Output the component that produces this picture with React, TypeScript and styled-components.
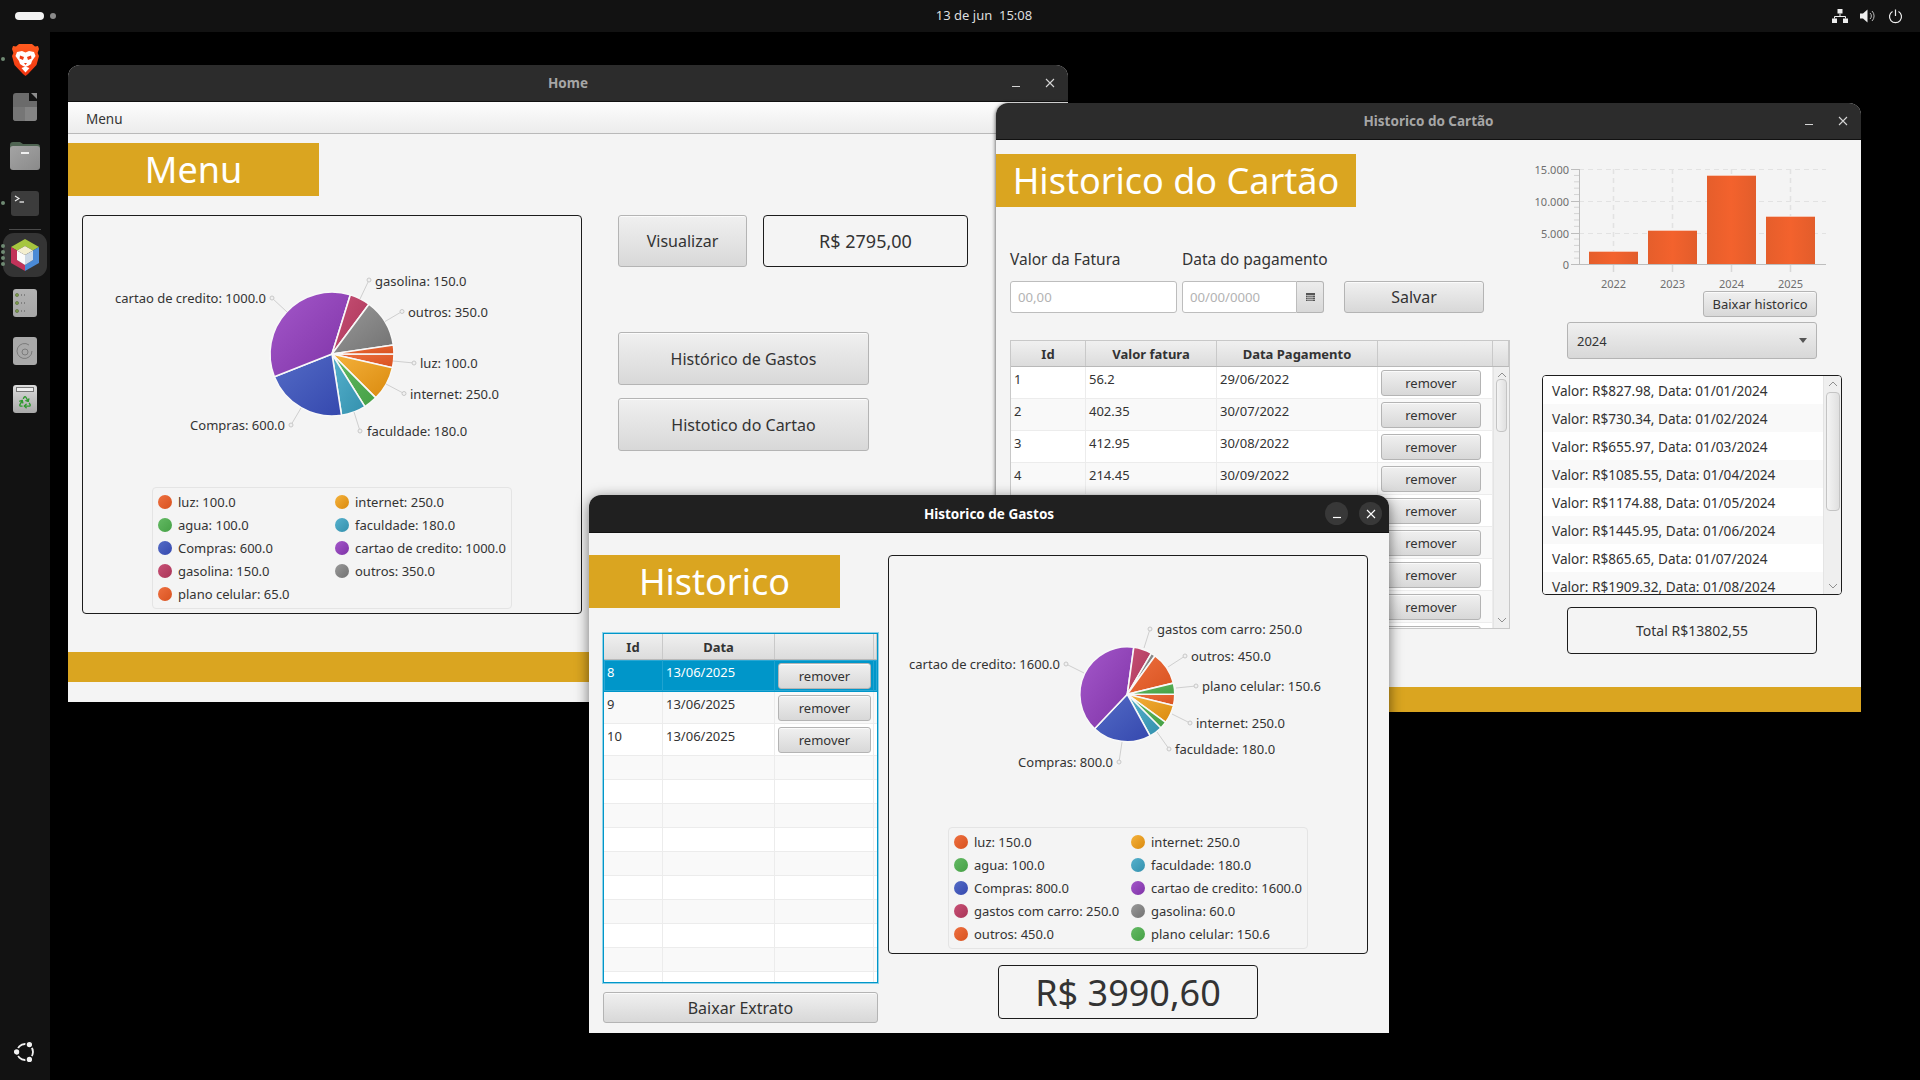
import React from "react";
import styled, { createGlobalStyle } from "styled-components";
import { Recycle } from "lucide-react";

const GlobalStyle = createGlobalStyle`
  html, body { margin: 0; padding: 0; width: 1920px; height: 1080px; overflow: hidden; background: #000; }
  body, input, button { font-family: "Noto Sans", "DejaVu Sans", sans-serif; }
  * { box-sizing: border-box; }
`;

const GOLD = "#daa520";
const TEXT = "#333";

const Screen = styled.div`display: flex; flex-direction: column; width: 1920px; height: 1080px; background: #000;`;
const TopBar = styled.div`display: grid; grid-template-columns: 1fr auto 1fr; align-items: center; height: 32px; background: #121212; padding: 0 17px 0 15px; flex: none;`;
const Workspaces = styled.div`display: flex; align-items: center; gap: 6px;`;
const ActivePill = styled.span`width: 29px; height: 8px; border-radius: 4px; background: #f2f2f2;`;
const IdleDot = styled.span`width: 6px; height: 6px; border-radius: 50%; background: #8a8a8a;`;
const Clock = styled.div`color: #dedede; font-size: 13px; line-height: 30px; margin: 0 0 2px 50px; white-space: pre;`;
const Tray = styled.div`display: flex; justify-content: flex-end; align-items: center; gap: 12px;`;
const Below = styled.div`display: flex; flex: 1; min-height: 0;`;

const Dock = styled.div`display: flex; flex-direction: column; align-items: center; width: 50px; background: #121212; padding: 3px 0; flex: none;`;
const DockSlot = styled.div<{ $active?: boolean }>`
  position: relative; display: flex; align-items: center; justify-content: center; flex: none;
  height: 48px; width: 44px;
  &::before {
    content: ""; position: absolute; left: 0; right: 0; top: 2px; bottom: 2px; border-radius: 11px;
    background: ${(p) => (p.$active ? "#343434" : "transparent")};
  }
  & > svg { position: relative; }
`;
const DockPip = styled.span`position: absolute; left: -2px; top: 50%; margin-top: -2px; width: 4px; height: 4px; border-radius: 50%; background: #6f8a73;`;
const DockPips = styled.span`position: absolute; left: -2px; top: 13px; display: flex; flex-direction: column; gap: 2px; z-index: 1;`;
const DockPipItem = styled.span`width: 4px; height: 4px; border-radius: 50%; background: #6f8a73;`;
const DockSep = styled.div`height: 1px; width: 32px; background: #4a4a4a; margin: 2px 0 1px; flex: none;`;
const DockEnd = styled.div`margin-top: auto;`;
const TrashBox = styled.div`
  position: relative; display: flex; align-items: center; justify-content: center; width: 24px; height: 28px; padding-top: 6px;
  border-radius: 3px; background: linear-gradient(#dcdcdc, #a9a9a9);
  &::before { content: ""; position: absolute; left: 3px; right: 3px; top: 2px; height: 3px; border: 1px solid #777; background: #eee; }
`;

const Desktop = styled.div`position: relative; flex: 1;`;
const Win = styled.div<{ $x: number; $y: number; $w: number; $h: number; $active?: boolean }>`
  position: absolute; left: ${(p) => p.$x - 50}px; top: ${(p) => p.$y - 32}px; width: ${(p) => p.$w}px; height: ${(p) => p.$h}px;
  display: flex; flex-direction: column; background: #f4f4f4; border-radius: 12px 12px 0 0; overflow: hidden;
  box-shadow: ${(p) => (p.$active ? "0 3px 14px rgba(0,0,0,.55)" : "0 1px 4px rgba(0,0,0,.75)")};
`;
const TitleBar = styled.div<{ $active?: boolean; $h: number }>`
  display: grid; grid-template-columns: 1fr auto 1fr; align-items: center; height: ${(p) => p.$h}px; flex: none;
  background: ${(p) => (p.$active ? "#202020" : "#2c2c2c")};
  border-bottom: 1px solid #111;
  color: ${(p) => (p.$active ? "#fff" : "#a6a6a6")};
  font-size: 13.5px; font-weight: 700;
`;
const TitleText = styled.div`grid-column: 2;`;
const Controls = styled.div`grid-column: 3; display: flex; justify-content: flex-end; gap: 11px; padding-right: 7px;`;
const Ctl = styled.div<{ $active?: boolean }>`
  display: flex; align-items: center; justify-content: center; width: 23px; height: 23px; border-radius: 50%;
  background: ${(p) => (p.$active ? "#383838" : "transparent")};
`;

const MenuBar = styled.div`height: 32px; flex: none; display: flex; align-items: center; padding: 3px 0 0 18px; font-size: 13.5px; color: ${TEXT}; background: linear-gradient(#fdfdfd, #ececec); border-bottom: 1px solid #b9b9b9;`;
const Banner = styled.div<{ $w: number; $mt: number }>`
  display: flex; align-items: center; justify-content: center; flex: none; height: 53px; width: ${(p) => p.$w}px; margin-top: ${(p) => p.$mt}px;
  background: ${GOLD}; color: #fff; font-size: 36px; line-height: 1;
`;
const Footer = styled.div<{ $mt: number }>`height: 30px; flex: none; background: ${GOLD}; margin-top: ${(p) => p.$mt}px;`;

const HomeMain = styled.div`display: flex; gap: 36px; margin: 19px 0 0 14px;`;
const ChartBox = styled.div<{ $w: number }>`
  display: flex; flex-direction: column; align-items: center; width: ${(p) => p.$w}px; height: 399px; flex: none;
  border: 1px solid #1c1c1c; border-radius: 4px; background: #f4f4f4;
  & > svg { display: block; flex: none; }
`;
const Legend = styled.div`
  display: grid; grid-template-columns: 177px auto; grid-auto-rows: 23px; width: 360px; height: 122px; margin-top: 1px; padding: 2px 0 0 5px; flex: none;
  border: 1px solid #e4e4e4; border-radius: 4px; font-size: 13px; color: ${TEXT};
`;
const LegendItem = styled.div`display: flex; align-items: center; gap: 6px; white-space: nowrap;`;
const Swatch = styled.span<{ $a: string; $b: string }>`width: 14px; height: 14px; border-radius: 50%; flex: none; background: linear-gradient(135deg, ${(p) => p.$a}, ${(p) => p.$b});`;

const HomeSide = styled.div`display: flex; flex-direction: column;`;
const SideTop = styled.div`display: flex; gap: 16px; margin-bottom: 65px;`;
const SideStack = styled.div`display: flex; flex-direction: column; gap: 13px;`;
const Btn = styled.button<{ $w: number; $h: number; $fs?: number }>`
  display: flex; align-items: center; justify-content: center; padding: 0; flex: none;
  width: ${(p) => p.$w}px; height: ${(p) => p.$h}px; font-size: ${(p) => p.$fs ?? 16}px; color: ${TEXT};
  background: linear-gradient(#f0f0f0, #d8d8d8); border: 1px solid #b4b4b4; border-radius: 3px;
  box-shadow: inset 0 1px 0 rgba(255,255,255,.7);
`;
const ValueBox = styled.div<{ $w: number; $h: number; $fs: number }>`
  display: flex; align-items: center; justify-content: center; flex: none; background: #f4f4f4;
  width: ${(p) => p.$w}px; height: ${(p) => p.$h}px; font-size: ${(p) => p.$fs}px; color: ${TEXT};
  border: 1px solid #1c1c1c; border-radius: 4px;
`;

const CartaoBody = styled.div`display: flex; flex: none;`;
const CartaoLeft = styled.div`display: flex; flex-direction: column; width: 514px; flex: none;`;
const FormArea = styled.div`display: grid; grid-template-columns: 167px 142px 140px; column-gap: 5px; padding-left: 14px; margin-top: 39px;`;
const FieldLabel = styled.div`font-size: 15.5px; line-height: 26px; color: ${TEXT}; white-space: nowrap; margin-bottom: 9px;`;
const TextInput = styled.input`
  width: 100%; height: 32px; padding: 0 7px; font-size: 13.2px; color: ${TEXT}; background: #fff;
  border: 1px solid #bdbdbd; border-radius: 3px; outline: none;
  &::placeholder { color: #b3b3b3; opacity: 1; }
`;
const DateGroup = styled.div`display: flex; height: 32px;`;
const DateInput = styled(TextInput)`border-radius: 3px 0 0 3px; width: 115px; flex: none;`;
const CalendarBtn = styled.div`flex: 1; display: flex; align-items: center; justify-content: center; background: linear-gradient(#ececec, #d8d8d8); border: 1px solid #b4b4b4; border-left: none; border-radius: 0 3px 3px 0;`;
const SaveCell = styled.div`margin-left: 15px;`;

const Table = styled.div<{ $focus?: boolean; $h: number; $mt: number; $ml: number; $w: number }>`
  display: flex; flex-direction: column; overflow: hidden; background: #fff; flex: none;
  height: ${(p) => p.$h}px; width: ${(p) => p.$w}px; margin: ${(p) => p.$mt}px 0 0 ${(p) => p.$ml}px;
  border: 1px solid ${(p) => (p.$focus ? "#0096c9" : "#c8c8c8")};
  box-shadow: ${(p) => (p.$focus ? "0 0 0 1px #8fd2e8" : "none")};
`;
const HeaderRow = styled.div<{ $cols: string; $h: number }>`
  display: grid; grid-template-columns: ${(p) => p.$cols}; height: ${(p) => p.$h}px; flex: none;
  background: linear-gradient(#f0f0f0, #dcdcdc); border-bottom: 1px solid #b9b9b9;
`;
const HeaderCell = styled.div`display: flex; align-items: center; justify-content: center; font-size: 13px; font-weight: 700; color: ${TEXT}; border-right: 1px solid #c9c9c9;`;
const TableBody = styled.div`display: flex; flex: 1; min-height: 0;`;
const Rows = styled.div`flex: 1; min-width: 0; overflow: hidden;`;
const Row = styled.div<{ $cols: string; $h: number; $odd?: boolean; $sel?: boolean }>`
  display: grid; grid-template-columns: ${(p) => p.$cols}; height: ${(p) => p.$h}px;
  background: ${(p) => (p.$sel ? "#0096c9" : p.$odd ? "#f9f9f9" : "#fff")};
  color: ${(p) => (p.$sel ? "#fff" : TEXT)};
  border-bottom: 1px solid ${(p) => (p.$sel ? "#0096c9" : "#ececec")};
  box-shadow: ${(p) => (p.$sel ? "inset 0 0 0 1px #2aa8d4" : "none")};
`;
const Cell = styled.div<{ $sel?: boolean }>`
  padding-left: 3px; font-size: 13px; line-height: 25px; white-space: nowrap; overflow: hidden;
  border-right: 1px solid ${(p) => (p.$sel ? "#1fa3d0" : "#ececec")};
`;
const ActionCell = styled(Cell)`padding: 3px 0 0 3px;`;
const ScrollBar = styled.div<{ $w: number }>`display: flex; flex-direction: column; align-items: center; width: ${(p) => p.$w}px; flex: none; background: #efefef; border-left: 1px solid #e4e4e4;`;
const ScrollArrow = styled.div`display: flex; align-items: center; justify-content: center; height: 16px; flex: none;`;
const Thumb = styled.div<{ $w: number; $h: number; $mt: number }>`
  width: ${(p) => p.$w}px; height: ${(p) => p.$h}px; margin-top: ${(p) => p.$mt}px; flex: none;
  border: 1px solid #c4c4c4; border-radius: 4px; background: linear-gradient(90deg, #f4f4f4, #e0e0e0);
`;
const ScrollFill = styled.div`flex: 1;`;

const CartaoRight = styled.div`display: flex; flex-direction: column; align-items: center; width: 300px; margin-left: 32px; flex: none;
  & > svg { display: block; flex: none; margin: 15px 0 0 -12px; align-self: flex-start; }
`;
const HistoryBtnRow = styled.div`align-self: flex-end; margin: 0 25px 0 0;`;
const Combo = styled.div`
  display: flex; align-items: center; justify-content: space-between; width: 250px; height: 37px; margin-top: 5px; padding: 0 9px; flex: none;
  font-size: 13px; color: ${TEXT}; background: linear-gradient(#f0f0f0, #d8d8d8); border: 1px solid #b4b4b4; border-radius: 3px;
`;
const ComboArrow = styled.span`width: 0; height: 0; border-left: 4.5px solid transparent; border-right: 4.5px solid transparent; border-top: 5px solid #555;`;
const ListBox = styled.div`display: flex; width: 300px; height: 220px; margin-top: 16px; flex: none; background: #fff; border: 1px solid #1c1c1c; border-radius: 4px; overflow: hidden;`;
const ListRow = styled.div<{ $odd?: boolean }>`height: 28px; line-height: 29px; padding-left: 9px; font-size: 13.6px; color: ${TEXT}; white-space: nowrap; background: ${(p) => (p.$odd ? "#f9f9f9" : "#fff")};`;
const TotalWrap = styled.div`margin-top: 12px;`;

const GastosBody = styled.div`display: flex; flex: 1;`;
const GastosLeft = styled.div`display: flex; flex-direction: column; width: 299px; flex: none;`;
const ExtratoWrap = styled.div`margin: 9px 0 0 14px;`;
const GastosRight = styled.div`display: flex; flex-direction: column; align-items: center; width: 480px; margin-top: 22px; flex: none;`;
const PriceWrap = styled.div`margin-top: 11px;`;

const C: Record<string, [string, string]> = {
  c0: ["#ee7040", "#d8521f"],
  c1: ["#f5b23c", "#da8a0e"],
  c2: ["#64ba64", "#45a045"],
  c3: ["#56b1cd", "#3390ad"],
  c4: ["#546cc6", "#3548ae"],
  c5: ["#a458ca", "#7e32a6"],
  c6: ["#c85176", "#a93457"],
  c7: ["#9a9a9a", "#717171"],
};

type Slice = { value: number; c: string };
type Callout = { text: string; tx: number; ty: number; anchor: "start" | "end"; dx: number; dy: number; ex: number; ey: number };

function Pie(props: { id: string; box: [number, number, number, number]; cx: number; cy: number; r: number; slices: Slice[]; callouts: Callout[] }) {
  const { id, box, cx, cy, r, slices, callouts } = props;
  const total = slices.reduce((s, x) => s + x.value, 0);
  let angle = 0;
  return (
    <svg width={box[2]} height={box[3]} viewBox={box.join(" ")}>
      <defs>
        {slices.map((s, i) => (
          <linearGradient key={i} id={`${id}-${i}`} x1="0" y1="0" x2="1" y2="1">
            <stop offset="0" stopColor={C[s.c][0]} />
            <stop offset="1" stopColor={C[s.c][1]} />
          </linearGradient>
        ))}
      </defs>
      {slices.map((s, i) => {
        const a0 = angle;
        const a1 = angle + (s.value / total) * Math.PI * 2;
        angle = a1;
        const large = a1 - a0 > Math.PI ? 1 : 0;
        const d = `M${cx} ${cy}L${cx + r * Math.cos(a0)} ${cy + r * Math.sin(a0)}A${r} ${r} 0 ${large} 1 ${cx + r * Math.cos(a1)} ${cy + r * Math.sin(a1)}Z`;
        return <path key={i} d={d} fill={`url(#${id}-${i})`} stroke="#f8f8f8" strokeWidth="1.6" strokeLinejoin="round" />;
      })}
      {callouts.map((c, i) => (
        <g key={i}>
          <line x1={c.dx} y1={c.dy} x2={c.ex} y2={c.ey} stroke="#cfcfcf" strokeWidth="1" />
          <circle cx={c.dx} cy={c.dy} r="2" fill="#f0f0f0" stroke="#c8c8c8" strokeWidth="1" />
          <text x={c.tx} y={c.ty} textAnchor={c.anchor} dominantBaseline="central" fontSize="13" fill={TEXT} fontFamily="Noto Sans, sans-serif">{c.text}</text>
        </g>
      ))}
    </svg>
  );
}

function LegendList({ items }: { items: [string, string][] }) {
  return (
    <Legend>
      {items.map(([t, c]) => (
        <LegendItem key={t}>
          <Swatch $a={C[c][0]} $b={C[c][1]} />
          {t}
        </LegendItem>
      ))}
    </Legend>
  );
}

const homeSlices: Slice[] = [
  { value: 100, c: "c0" }, { value: 250, c: "c1" }, { value: 100, c: "c2" }, { value: 180, c: "c3" }, { value: 600, c: "c4" },
  { value: 1000, c: "c5" }, { value: 150, c: "c6" }, { value: 350, c: "c7" }, { value: 65, c: "c0" },
];
const homeCallouts: Callout[] = [
  { text: "gasolina: 150.0", tx: 375, ty: 281, anchor: "start", dx: 369, dy: 280, ex: 360, ey: 299 },
  { text: "outros: 350.0", tx: 408, ty: 312, anchor: "start", dx: 402, dy: 311.5, ex: 385, ey: 321.5 },
  { text: "luz: 100.0", tx: 420, ty: 363, anchor: "start", dx: 414, dy: 363, ex: 393, ey: 361 },
  { text: "internet: 250.0", tx: 410, ty: 394, anchor: "start", dx: 404, dy: 393.5, ex: 386, ey: 384 },
  { text: "faculdade: 180.0", tx: 367, ty: 431, anchor: "start", dx: 360, dy: 431, ex: 354, ey: 412 },
  { text: "Compras: 600.0", tx: 285, ty: 425, anchor: "end", dx: 291, dy: 425, ex: 301, ey: 408 },
  { text: "cartao de credito: 1000.0", tx: 266, ty: 298, anchor: "end", dx: 272, dy: 298, ex: 287, ey: 312 },
];
const homeLegend: [string, string][] = [
  ["luz: 100.0", "c0"], ["internet: 250.0", "c1"], ["agua: 100.0", "c2"], ["faculdade: 180.0", "c3"], ["Compras: 600.0", "c4"],
  ["cartao de credito: 1000.0", "c5"], ["gasolina: 150.0", "c6"], ["outros: 350.0", "c7"], ["plano celular: 65.0", "c0"],
];
const gastosSlices: Slice[] = [
  { value: 150, c: "c0" }, { value: 250, c: "c1" }, { value: 100, c: "c2" }, { value: 180, c: "c3" }, { value: 800, c: "c4" },
  { value: 1600, c: "c5" }, { value: 250, c: "c6" }, { value: 60, c: "c7" }, { value: 450, c: "c0" }, { value: 150.6, c: "c2" },
];
const gastosCallouts: Callout[] = [
  { text: "gastos com carro: 250.0", tx: 1157, ty: 629, anchor: "start", dx: 1150, dy: 629, ex: 1144, ey: 648 },
  { text: "outros: 450.0", tx: 1191, ty: 656, anchor: "start", dx: 1185, dy: 656, ex: 1168, ey: 667 },
  { text: "plano celular: 150.6", tx: 1202, ty: 686, anchor: "start", dx: 1196, dy: 686, ex: 1176, ey: 688 },
  { text: "internet: 250.0", tx: 1196, ty: 723, anchor: "start", dx: 1190, dy: 723, ex: 1172, ey: 714 },
  { text: "faculdade: 180.0", tx: 1175, ty: 749, anchor: "start", dx: 1169, dy: 749, ex: 1157, ey: 732 },
  { text: "Compras: 800.0", tx: 1113, ty: 761.5, anchor: "end", dx: 1119, dy: 762, ex: 1122, ey: 742 },
  { text: "cartao de credito: 1600.0", tx: 1060, ty: 664, anchor: "end", dx: 1066, dy: 664, ex: 1084, ey: 673 },
];
const gastosLegend: [string, string][] = [
  ["luz: 150.0", "c0"], ["internet: 250.0", "c1"], ["agua: 100.0", "c2"], ["faculdade: 180.0", "c3"], ["Compras: 800.0", "c4"],
  ["cartao de credito: 1600.0", "c5"], ["gastos com carro: 250.0", "c6"], ["gasolina: 60.0", "c7"], ["outros: 450.0", "c0"], ["plano celular: 150.6", "c2"],
];

function Chevron({ up, color = "#8f8f8f" }: { up?: boolean; color?: string }) {
  return (
    <svg width="10" height="6" viewBox="0 0 10 6">
      <path d={up ? "M1 5L5 1L9 5" : "M1 1L5 5L9 1"} fill="none" stroke={color} strokeWidth="1" />
    </svg>
  );
}

function WinControls({ active }: { active?: boolean }) {
  const c = active ? "#ffffff" : "#d4d4d4";
  return (
    <Controls>
      <Ctl $active={active}>
        <svg width="10" height="10" viewBox="0 0 10 10"><path d="M1 8.5H9" stroke={c} strokeWidth="1.2" /></svg>
      </Ctl>
      <Ctl $active={active}>
        <svg width="10" height="10" viewBox="0 0 10 10"><path d="M1 1L9 9M9 1L1 9" stroke={c} strokeWidth="1.1" /></svg>
      </Ctl>
    </Controls>
  );
}

function BarChart() {
  const bars = [
    { x: 1589, top: 252, year: "2022" }, { x: 1648, top: 231, year: "2023" },
    { x: 1707, top: 176, year: "2024" }, { x: 1766, top: 217, year: "2025" },
  ];
  const yl = [{ y: 169, t: "15.000" }, { y: 201, t: "10.000" }, { y: 233, t: "5.000" }, { y: 264, t: "0" }];
  const minor: number[] = [];
  for (let i = 0; i < 15; i++) if (i % 5) minor.push(264.5 - i * 6.36);
  return (
    <svg width={310} height={136} viewBox="1530 155 310 136">
      <defs>
        <linearGradient id="bar" x1="0" x2="1" y1="0" y2="0">
          <stop offset="0" stopColor="#e55e2b" />
          <stop offset="0.5" stopColor="#f3622d" />
          <stop offset="1" stopColor="#e25d2b" />
        </linearGradient>
      </defs>
      {yl.slice(0, 3).map((l) => <line key={l.t} x1="1579" x2="1826" y1={l.y + 0.5} y2={l.y + 0.5} stroke="#e2e2e2" strokeDasharray="5 4" />)}
      {bars.map((b) => <line key={b.year} x1={b.x + 24.5} x2={b.x + 24.5} y1="169" y2="264" stroke="#e2e2e2" strokeWidth="1.5" strokeDasharray="5 4" />)}
      {bars.map((b) => <line key={b.year} x1={b.x + 24.5} x2={b.x + 24.5} y1="264" y2="272" stroke="#d8d8d8" strokeWidth="1.5" />)}
      {bars.map((b) => (
        <g key={b.year}>
          <rect x={b.x} y={b.top} width="49" height={264 - b.top} fill="url(#bar)" />
          <line x1={b.x} x2={b.x + 49} y1={b.top - 0.5} y2={b.top - 0.5} stroke="#f6c6b4" />
          <text x={b.x + 24.5} y="283" textAnchor="middle" dominantBaseline="central" fontSize="11" fill="#6f6f6f" fontFamily="Noto Sans, sans-serif">{b.year}</text>
        </g>
      ))}
      {minor.map((y) => <line key={y} x1="1574" x2="1579" y1={y} y2={y} stroke="#d4d4d4" />)}
      {yl.map((l) => (
        <g key={l.t}>
          <line x1="1571" x2="1579" y1={l.y + 0.5} y2={l.y + 0.5} stroke="#bdbdbd" />
          <text x="1569" y={l.y} textAnchor="end" dominantBaseline="central" fontSize="11" fill="#6f6f6f" fontFamily="Noto Sans, sans-serif">{l.t}</text>
        </g>
      ))}
      <line x1="1579.5" x2="1579.5" y1="169" y2="265" stroke="#bdbdbd" />
      <line x1="1579" x2="1826" y1="264.5" y2="264.5" stroke="#bdbdbd" />
    </svg>
  );
}

const cartaoCols = "75px 131px 161px 115px";
const cartaoRows = [
  ["1", "56.2", "29/06/2022"], ["2", "402.35", "30/07/2022"], ["3", "412.95", "30/08/2022"], ["4", "214.45", "30/09/2022"],
  ["", "", ""], ["", "", ""], ["", "", ""], ["", "", ""], ["", "", ""],
];
const gastosCols = "59px 112px 99px 3px";
const gastosRows = [["8", "13/06/2025"], ["9", "13/06/2025"], ["10", "13/06/2025"]];
const listRows = [
  "Valor: R$827.98, Data: 01/01/2024", "Valor: R$730.34, Data: 01/02/2024", "Valor: R$655.97, Data: 01/03/2024", "Valor: R$1085.55, Data: 01/04/2024",
  "Valor: R$1174.88, Data: 01/05/2024", "Valor: R$1445.95, Data: 01/06/2024", "Valor: R$865.65, Data: 01/07/2024", "Valor: R$1909.32, Data: 01/08/2024",
];

const BraveIcon = () => (
  <svg width="27" height="33" viewBox="0 0 27 33">
    <defs>
      <linearGradient id="brave" x1="0" y1="0" x2="0" y2="1"><stop offset="0" stopColor="#ff5b1f" /><stop offset="1" stopColor="#f1330f" /></linearGradient>
    </defs>
    <path d="M7 1H20L23 3.5L26 3L27 6L25.6 10L27 13L24.5 22L16 31L13.5 33L11 31L2.5 22L0 13L1.4 10L0 6L1 3L4 3.5Z" fill="url(#brave)" />
    <path d="M5 9L10 8L13.5 9.5L17 8L22 9L23.5 13L20 18L19 21L16 23L13.5 24L11 23L8 21L7 18L3.5 13Z" fill="#fff" />
    <path d="M8 12.5L12 14L11 17L7.5 15.5ZM19 12.5L15 14L16 17L19.5 15.5ZM12 20H15L13.5 22ZM13.5 17V20" fill="#ef3c14" />
    <path d="M9.5 25L13.5 23.5L17.5 25L13.5 29.5Z" fill="#fff" />
  </svg>
);
const DocsIcon = () => (
  <svg width="24" height="28" viewBox="0 0 24 28">
    <path d="M3 0H16V8H24V25a3 3 0 0 1-3 3H3a3 3 0 0 1-3-3V3a3 3 0 0 1 3-3Z" fill="#6b6b6b" />
    <path d="M12 14H24V25a3 3 0 0 1-3 3H12Z" fill="#848484" />
    <path d="M0 14H12V28H3a3 3 0 0 1-3-3Z" fill="#767676" />
    <path d="M18 0L24 6V0Z" fill="#8d8d8d" />
  </svg>
);
const FolderIcon = () => (
  <svg width="30" height="28" viewBox="0 0 30 28" style={{ marginTop: 2 }}>
    <defs><linearGradient id="fold" x1="0" y1="0" x2="1" y2="1"><stop offset="0" stopColor="#a4a4a4" /><stop offset="1" stopColor="#8a8a8a" /></linearGradient></defs>
    <path d="M0 3a3 3 0 0 1 3-3h7l3 2h14a3 3 0 0 1 3 3v5H0Z" fill="#4f6452" />
    <rect y="4" width="30" height="24" rx="3" fill="url(#fold)" />
    <rect x="11" y="10" width="8" height="2" fill="#f0f0f0" />
  </svg>
);
const TermIcon = () => (
  <svg width="28" height="25" viewBox="0 0 28 25">
    <rect width="28" height="25" rx="3" fill="#3c3c3c" />
    <path d="M4 5L8 7.5L4 10" stroke="#eee" fill="none" strokeWidth="1.1" />
    <path d="M8.5 11H13" stroke="#eee" strokeWidth="1.3" />
  </svg>
);
const NetbeansIcon = () => (
  <svg width="28" height="32" viewBox="0 0 28 32">
    <path d="M14 0L28 8L22 11.5L14 7L6 11.5L0 8Z" fill="#a6c63f" />
    <path d="M0 8L6 11.5V21L14 26V32L0 24Z" fill="#c2335a" />
    <path d="M28 8V24L14 32V26L22 21V11.5Z" fill="#4a8ad6" />
    <path d="M14 7L22 11.5L14 16L6 11.5Z" fill="#f3eecf" />
    <path d="M6 11.5L14 16V26L6 21Z" fill="#fbfbfb" />
    <path d="M22 11.5L14 16V26L22 21Z" fill="#ccd9e6" />
  </svg>
);
const DriveIcon = () => (
  <svg width="24" height="28" viewBox="0 0 24 28">
    <defs><linearGradient id="drv" x1="0" y1="0" x2="0" y2="1"><stop offset="0" stopColor="#b2b2b2" /><stop offset="1" stopColor="#a6a6a6" /></linearGradient></defs>
    <rect width="24" height="28" rx="3" fill="url(#drv)" />
    {[6, 14, 22].map((y) => (
      <g key={y}>
        <circle cx="4" cy={y} r="1.6" fill="#7d9a4a" stroke="#4a6030" strokeWidth=".5" />
        <rect x="8" y={y - 0.5} width="1" height="1" fill="#555" />
        <rect x="11" y={y - 0.5} width="1" height="1" fill="#555" />
      </g>
    ))}
  </svg>
);
const DiscIcon = () => (
  <svg width="24" height="28" viewBox="0 0 24 28">
    <rect width="24" height="28" rx="3" fill="#a9a9a9" />
    <path d="M19 14a7.5 7.5 0 1 1-3-6" fill="none" stroke="#7b7b7b" />
    <circle cx="12" cy="15" r="3" fill="none" stroke="#7b7b7b" />
  </svg>
);
const UbuntuIcon = () => (
  <svg width="24" height="24" viewBox="0 0 24 24" style={{ marginTop: -2 }}>
    <circle cx="12" cy="12" r="8" fill="none" stroke="#f2f2f2" strokeWidth="1.8" />
    <g fill="#f2f2f2" stroke="#121212" strokeWidth="1.5">
      <circle cx="3.6" cy="12" r="3.4" />
      <circle cx="16.4" cy="4.6" r="3.4" />
      <circle cx="16.4" cy="19.4" r="3.4" />
    </g>
  </svg>
);

export default function App() {
  return (
    <>
      <GlobalStyle />
      <Screen>
        <TopBar>
          <Workspaces><ActivePill /><IdleDot /></Workspaces>
          <Clock>13 de jun  15:08</Clock>
          <Tray>
            <svg width="16" height="14" viewBox="0 0 16 14">
              <path d="M5.5 0H10.5V4.5H5.5ZM0 9.5H5V14H0ZM11 9.5H16V14H11Z" fill="#eee" />
              <path d="M8 4.5V7.5M2.5 9.5V7.5H13.5V9.5" fill="none" stroke="#eee" />
            </svg>
            <svg width="16" height="14" viewBox="0 0 16 14">
              <path d="M0 4.5H3L7.5 0.5V13.5L3 9.5H0Z" fill="#eee" />
              <path d="M10 4A4 4 0 0 1 10 10M12 2A7 7 0 0 1 12 12" fill="none" stroke="#bbb" />
            </svg>
            <svg width="15" height="15" viewBox="0 0 15 15">
              <path d="M4.5 2.5A6 6 0 1 0 10.5 2.5M7.5 0.5V7" fill="none" stroke="#eee" strokeWidth="1.2" />
            </svg>
          </Tray>
        </TopBar>
        <Below>
          <Dock>
            <DockSlot><DockPip /><BraveIcon /></DockSlot>
            <DockSlot><DocsIcon /></DockSlot>
            <DockSlot><FolderIcon /></DockSlot>
            <DockSlot><DockPip /><TermIcon /></DockSlot>
            <DockSep />
            <DockSlot $active>
              <DockPips><DockPipItem /><DockPipItem /><DockPipItem /><DockPipItem /></DockPips>
              <NetbeansIcon />
            </DockSlot>
            <DockSlot><DriveIcon /></DockSlot>
            <DockSlot><DiscIcon /></DockSlot>
            <DockSlot><TrashBox><Recycle size={14} color="#2f9a2f" strokeWidth={2.4} /></TrashBox></DockSlot>
            <DockEnd><DockSlot><UbuntuIcon /></DockSlot></DockEnd>
          </Dock>
          <Desktop>
            <Win $x={68} $y={65} $w={1000} $h={637}>
              <TitleBar $h={37}><TitleText>Home</TitleText><WinControls /></TitleBar>
              <MenuBar>Menu</MenuBar>
              <Banner $w={251} $mt={9}>Menu</Banner>
              <HomeMain>
                <ChartBox $w={500}>
                  <Pie id="home" box={[83, 216, 498, 270]} cx={332} cy={354} r={62} slices={homeSlices} callouts={homeCallouts} />
                  <LegendList items={homeLegend} />
                </ChartBox>
                <HomeSide>
                  <SideTop>
                    <Btn $w={129} $h={52}>Visualizar</Btn>
                    <ValueBox $w={205} $h={52} $fs={18}>R$ 2795,00</ValueBox>
                  </SideTop>
                  <SideStack>
                    <Btn $w={251} $h={53}>Histórico de Gastos</Btn>
                    <Btn $w={251} $h={53}>Histotico do Cartao</Btn>
                  </SideStack>
                </HomeSide>
              </HomeMain>
              <Footer $mt={38} />
            </Win>

            <Win $x={996} $y={103} $w={865} $h={609}>
              <TitleBar $h={37}><TitleText>Historico do Cartão</TitleText><WinControls /></TitleBar>
              <CartaoBody>
                <CartaoLeft>
                  <Banner $w={360} $mt={14}>Historico do Cartão</Banner>
                  <FormArea>
                    <FieldLabel>Valor da Fatura</FieldLabel>
                    <FieldLabel>Data do pagamento</FieldLabel>
                    <span />
                    <TextInput readOnly placeholder="00,00" />
                    <DateGroup>
                      <DateInput readOnly placeholder="00/00/0000" />
                      <CalendarBtn>
                        <svg width="9" height="8" viewBox="0 0 9 8">
                          <rect width="9" height="8" fill="#555" />
                          <path d="M0 2.5H9M0 4.5H9M0 6.5H9M2 2V8M4 2V8M6 2V8" stroke="#ddd" strokeWidth=".6" />
                        </svg>
                      </CalendarBtn>
                    </DateGroup>
                    <SaveCell><Btn $w={140} $h={32}>Salvar</Btn></SaveCell>
                  </FormArea>
                  <Table $h={289} $mt={27} $ml={14} $w={500}>
                    <HeaderRow $cols={`${cartaoCols} 1fr`} $h={26}>
                      <HeaderCell>Id</HeaderCell>
                      <HeaderCell>Valor fatura</HeaderCell>
                      <HeaderCell>Data Pagamento</HeaderCell>
                      <HeaderCell />
                      <HeaderCell />
                    </HeaderRow>
                    <TableBody>
                      <Rows>
                        {cartaoRows.map((r, i) => (
                          <Row key={i} $cols={cartaoCols} $h={32} $odd={i % 2 === 1}>
                            <Cell>{r[0]}</Cell>
                            <Cell>{r[1]}</Cell>
                            <Cell>{r[2]}</Cell>
                            <ActionCell><Btn $w={100} $h={26} $fs={13}>remover</Btn></ActionCell>
                          </Row>
                        ))}
                      </Rows>
                      <ScrollBar $w={16}>
                        <ScrollArrow><Chevron up /></ScrollArrow>
                        <Thumb $w={11} $h={53} $mt={-4} />
                        <ScrollFill />
                        <ScrollArrow><Chevron /></ScrollArrow>
                      </ScrollBar>
                    </TableBody>
                  </Table>
                </CartaoLeft>
                <CartaoRight>
                  <BarChart />
                  <HistoryBtnRow><Btn $w={114} $h={26} $fs={13}>Baixar historico</Btn></HistoryBtnRow>
                  <Combo>2024<ComboArrow /></Combo>
                  <ListBox>
                    <Rows>
                      {listRows.map((t, i) => <ListRow key={t} $odd={i % 2 === 1}>{t}</ListRow>)}
                    </Rows>
                    <ScrollBar $w={18}>
                      <ScrollArrow><Chevron up /></ScrollArrow>
                      <Thumb $w={14} $h={119} $mt={0} />
                      <ScrollFill />
                      <ScrollArrow><Chevron /></ScrollArrow>
                    </ScrollBar>
                  </ListBox>
                  <TotalWrap><ValueBox $w={250} $h={47} $fs={14}>Total R$13802,55</ValueBox></TotalWrap>
                </CartaoRight>
              </CartaoBody>
              <Footer $mt={33} />
            </Win>

            <Win $x={589} $y={495} $w={800} $h={538} $active>
              <TitleBar $h={38} $active><TitleText>Historico de Gastos</TitleText><WinControls active /></TitleBar>
              <GastosBody>
                <GastosLeft>
                  <Banner $w={251} $mt={22}>Historico</Banner>
                  <Table $focus $h={350} $mt={25} $ml={14} $w={275}>
                    <HeaderRow $cols={`${gastosCols} 1fr`} $h={26}>
                      <HeaderCell>Id</HeaderCell>
                      <HeaderCell>Data</HeaderCell>
                      <HeaderCell />
                      <HeaderCell />
                    </HeaderRow>
                    <Rows>
                      {gastosRows.map((r, i) => (
                        <Row key={r[0]} $cols={gastosCols} $h={32} $odd={i === 1} $sel={i === 0}>
                          <Cell $sel={i === 0}>{r[0]}</Cell>
                          <Cell $sel={i === 0}>{r[1]}</Cell>
                          <ActionCell $sel={i === 0}><Btn $w={93} $h={26} $fs={13}>remover</Btn></ActionCell>
                          <span />
                        </Row>
                      ))}
                      {Array.from({ length: 10 }, (_, i) => (
                        <Row key={i} $cols={gastosCols} $h={24} $odd={i % 2 === 0}>
                          <Cell /><Cell /><Cell /><span />
                        </Row>
                      ))}
                    </Rows>
                  </Table>
                  <ExtratoWrap><Btn $w={275} $h={31}>Baixar Extrato</Btn></ExtratoWrap>
                </GastosLeft>
                <GastosRight>
                  <ChartBox $w={480}>
                    <Pie id="gastos" box={[889, 556, 478, 270]} cx={1127.3} cy={694.3} r={47.5} slices={gastosSlices} callouts={gastosCallouts} />
                    <LegendList items={gastosLegend} />
                  </ChartBox>
                  <PriceWrap><ValueBox $w={260} $h={54} $fs={36}>R$ 3990,60</ValueBox></PriceWrap>
                </GastosRight>
              </GastosBody>
            </Win>
          </Desktop>
        </Below>
      </Screen>
    </>
  );
}
